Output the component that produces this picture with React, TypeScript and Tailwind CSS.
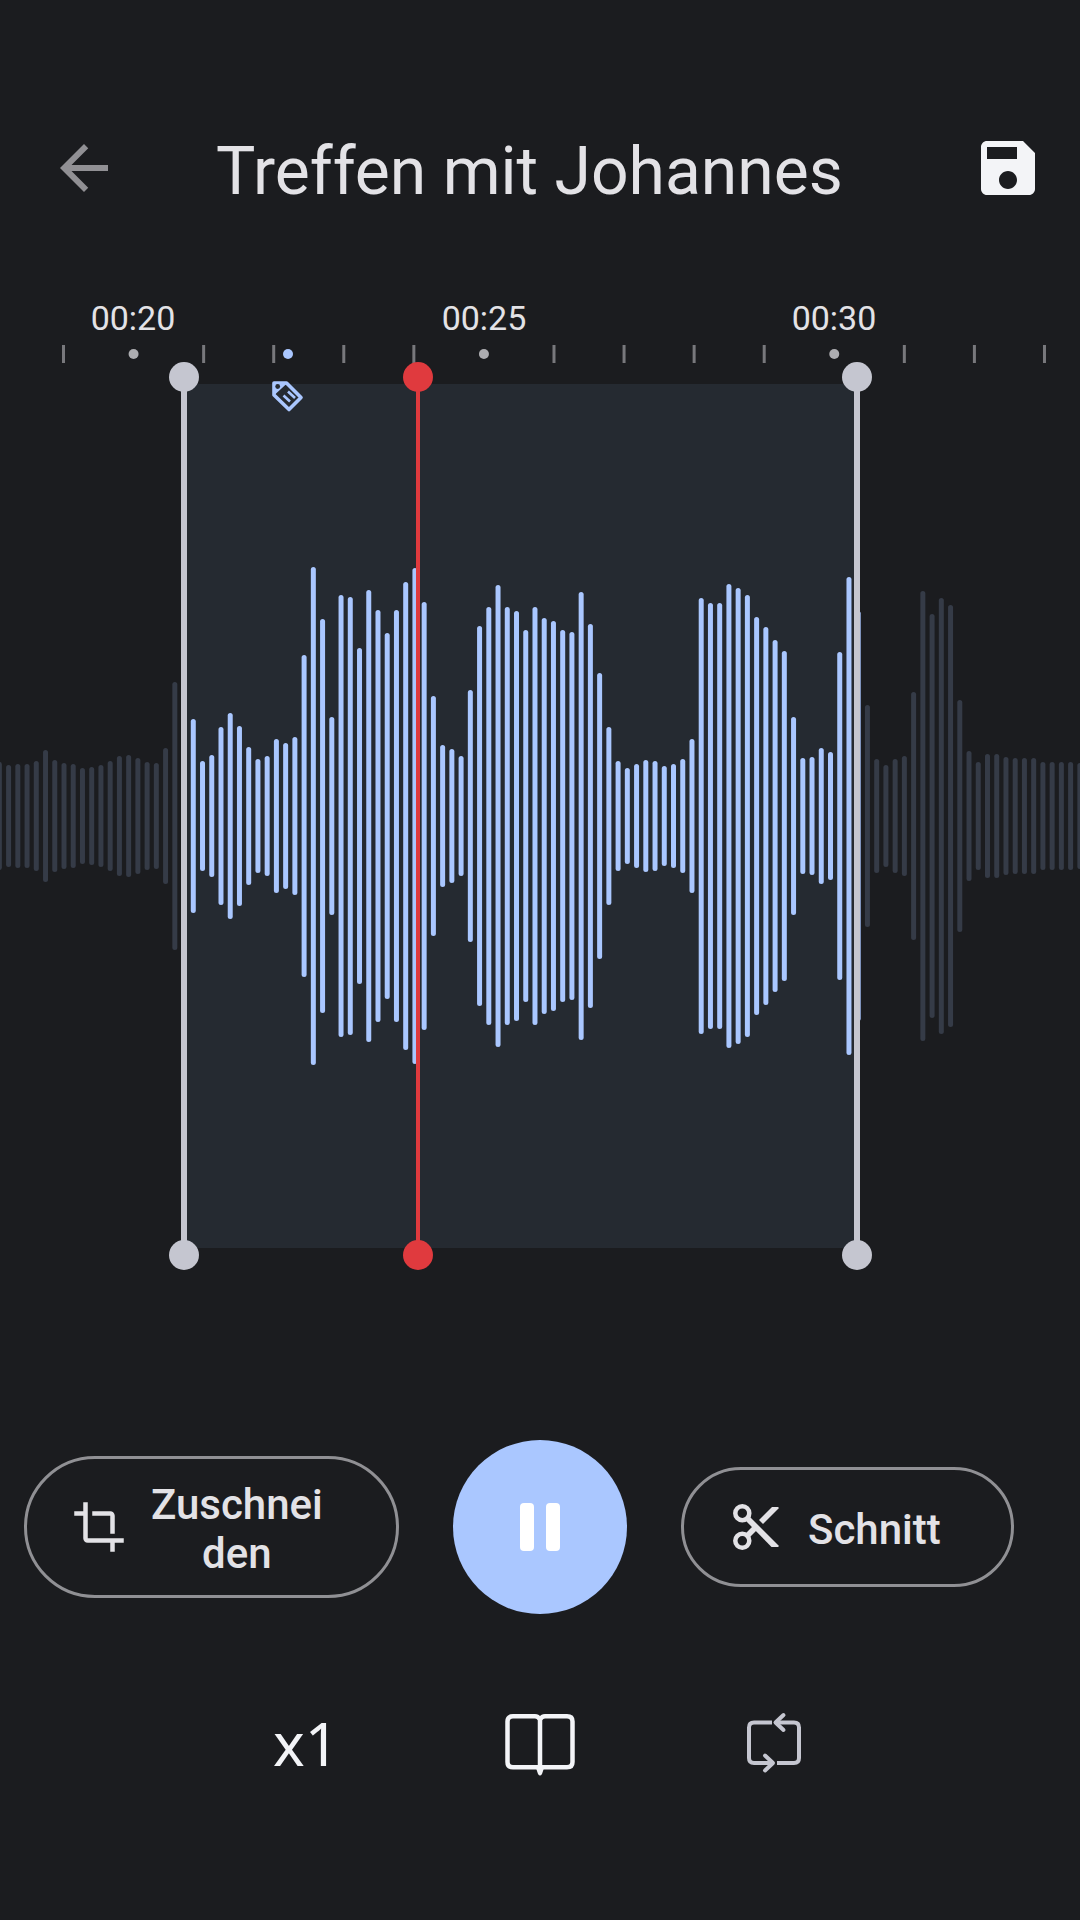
import { useState } from 'react';

// half height of every bar in the waveform, left to right
const peaks = [
  54, 51, 52, 52, 55, 66, 56, 53, 52, 48, 49, 51, 55, 60, 61, 58, 54, 53, 68, 134,
  60, 97, 55, 61, 89, 103, 90, 69, 57, 60, 77, 73, 79, 161, 249, 197, 99, 221, 219, 168,
  226, 206, 183, 206, 234, 248, 214, 120, 71, 67, 60, 126, 190, 209, 231, 209, 205, 186, 209, 198,
  195, 186, 184, 224, 192, 143, 89, 55, 48, 52, 56, 55, 50, 52, 57, 77, 218, 213, 213, 232,
  228, 221, 199, 189, 176, 165, 99, 58, 59, 68, 64, 164, 239, 205, 111, 57, 51, 57, 60, 124,
  225, 202, 218, 211, 116, 65, 54, 62, 62, 59, 58, 58, 58, 54, 54, 54, 54, 53,
];

const labels = [
  { x: 133, text: '00:20' },
  { x: 484, text: '00:25' },
  { x: 834, text: '00:30' },
];

const selection = { start: 184, end: 857 };
const playhead = 418;

const barX = (i: number) => i * 9.235 - 0.65;

function Marker({ x, width, color }: { x: number; width: number; color: string }) {
  return (
    <g fill={color}>
      <rect x={x - width / 2} y={87} width={width} height={878} />
      <circle cx={x} cy={87} r={15} />
      <circle cx={x} cy={965} r={15} />
    </g>
  );
}

function Timeline() {
  return (
    <svg viewBox="0 0 1080 990" className="block w-full" role="img" aria-label="Wellenform">
      {labels.map((l) => (
        <text
          key={l.text}
          x={l.x}
          y={40}
          textAnchor="middle"
          className="fill-[#e3e2e6] text-[34px]"
        >
          {l.text}
        </text>
      ))}

      {Array.from({ length: 15 }, (_, i) => {
        const x = 63.5 + i * 70.07;
        return i % 5 === 1 ? (
          <circle key={i} cx={x} cy={64} r={5} fill="#adadb1" />
        ) : (
          <rect key={i} x={x - 1.5} y={55} width={3} height={18} fill="#78787c" />
        );
      })}

      <rect x={selection.start} y={94} width={selection.end - selection.start} height={864} fill="#252a31" />

      {peaks.map((h, i) => {
        const x = barX(i);
        const selected = x >= selection.start && x <= selection.end + 2;
        return (
          <rect
            key={i}
            x={x - 2.5}
            y={526 - h}
            width={5}
            height={h * 2}
            rx={2.5}
            fill={selected ? '#aac7ff' : '#353b47'}
          />
        );
      })}

      {/* bookmark */}
      <circle cx={288} cy={64} r={5} fill="#aac7ff" />
      <g fill="none" stroke="#aac7ff" strokeLinejoin="round">
        <path d="M274 93H286.5L301 107.5 289 119.5 274 105z" strokeWidth={3.6} />
        <path d="M274 93H286L274 104z" fill="#aac7ff" strokeWidth={2} />
        <path d="M283.5 105.5 290 111.5M288 101.5 295 108" strokeWidth={2.6} />
      </g>
      <circle cx={277.7} cy={96.5} r={2.4} fill="#252a31" />

      <Marker x={selection.start} width={6} color="#c5c6d0" />
      <Marker x={selection.end} width={6} color="#c5c6d0" />
      <Marker x={playhead} width={4} color="#e03a3e" />
    </svg>
  );
}

function BackIcon() {
  return (
    <svg viewBox="0 0 24 24" className="size-18 fill-[#919094]">
      <path d="M20 11H7.83l5.59-5.59L12 4l-8 8 8 8 1.41-1.41L7.83 13H20v-2z" />
    </svg>
  );
}

function SaveIcon() {
  return (
    <svg viewBox="0 0 24 24" className="size-18 fill-[#f3f4f7]">
      <path d="M17 3H5c-1.11 0-2 .9-2 2v14c0 1.1.89 2 2 2h14c1.1 0 2-.9 2-2V7l-4-4zm-5 16c-1.66 0-3-1.34-3-3s1.34-3 3-3 3 1.34 3 3-1.34 3-3 3zm3-10H5V5h10v4z" />
    </svg>
  );
}

function CropIcon() {
  return (
    <svg viewBox="0 0 24 24" className="size-[54px] shrink-0 fill-[#e3e2e6]">
      <path d="M17 15h2V7c0-1.1-.9-2-2-2H9v2h8v8zM7 17V1H5v4H1v2h4v10c0 1.1.9 2 2 2h10v4h2v-4h4v-2H7z" />
    </svg>
  );
}

function CutIcon() {
  return (
    <svg viewBox="0 0 54 54" className="size-[54px] shrink-0">
      <g fill="none" stroke="#e3e2e6" strokeWidth={4.5}>
        <circle cx={13.3} cy={13.2} r={7} />
        <circle cx={13.3} cy={40.8} r={7} />
        <path d="M18.3 35.8 26 28" strokeWidth={5.6} />
      </g>
      <g fill="#e3e2e6">
        <path d="M20.5 16.5 49.5 45.5V47H42.5L16.5 20.5z" />
        <path d="M49.5 7V8.5L34 24 30 20 43 7z" />
      </g>
    </svg>
  );
}

function BookIcon() {
  return (
    <svg viewBox="0 0 72 72" className="size-18" fill="none" stroke="#f3f4f7" strokeWidth={4.5}>
      <path d="M36 12.5Q34 9.3 31 9.3H9Q3.500 9.3 3.500 14.500V55Q3.500 60.300 9 60.300H63Q68.500 60.300 68.500 55V14.500Q68.500 9.3 63 9.3H41Q38 9.3 36 12.500V64" />
      <path d="M32 61H40L38 67Q36 70 34 67z" fill="#f3f4f7" stroke="none" />
    </svg>
  );
}

function RepeatIcon() {
  return (
    <svg viewBox="0 0 72 72" className="size-18" fill="none" stroke="#c5c6d0" strokeWidth={4}>
      <path d="M34 15.5H16Q11 15.5 11 20.5V51Q11 56 16 56H34" />
      <path d="M39 56H56Q61 56 61 51V20.5Q61 15.5 56 15.5H39" />
      <path
        d="M45.5 8 37.5 15.5 45.5 23M27 48.5 35 56 27 63.5"
        strokeLinecap="round"
        strokeLinejoin="round"
      />
    </svg>
  );
}

function PauseIcon() {
  return (
    <svg viewBox="0 0 40 48" className="h-12 w-10 fill-white">
      <rect width={14} height={48} rx={4} />
      <rect x={26} width={14} height={48} rx={4} />
    </svg>
  );
}

function PlayIcon() {
  return (
    <svg viewBox="0 0 40 48" className="h-12 w-10 fill-white">
      <path d="M4 0 40 24 4 48z" />
    </svg>
  );
}

export default function App() {
  const [playing, setPlaying] = useState(true);

  return (
    <div className="flex min-h-screen flex-col bg-[#1b1c1f] pt-32 font-['Roboto',sans-serif] text-[#e3e2e6]">
      <header className="flex items-start pr-9 pl-12">
        <button type="button" aria-label="Zurück" className="py-1">
          <BackIcon />
        </button>
        <h1 className="flex-1 pt-1 pl-24 text-[66px] leading-20 whitespace-nowrap">Treffen mit Johannes</h1>
        <button type="button" aria-label="Speichern" className="py-1">
          <SaveIcon />
        </button>
      </header>

      <main className="pt-[78px]">
        <Timeline />
      </main>

      <div className="grid grid-cols-[1fr_174px_1fr] items-center pt-40">
        <button
          type="button"
          className="ml-6 mr-[54px] flex h-[142px] items-center gap-[25px] rounded-full border-3 border-[#909094] pl-[45px]"
        >
          <CropIcon />
          <span className="pt-1 text-center text-[42px] leading-[49px] font-medium">
            Zuschnei
            <br />
            den
          </span>
        </button>
        <button
          type="button"
          aria-label={playing ? 'Pause' : 'Wiedergabe'}
          onClick={() => setPlaying(!playing)}
          className="flex size-[174px] items-center justify-center rounded-full bg-[#aac7ff]"
        >
          {playing ? <PauseIcon /> : <PlayIcon />}
        </button>
        <button
          type="button"
          className="ml-[54px] mr-[66px] flex h-30 items-center gap-[25px] rounded-full border-3 border-[#909094] pl-[45px]"
        >
          <CutIcon />
          <span className="pt-1 text-[42px] leading-[49px] font-medium">Schnitt</span>
        </button>
      </div>

      <div className="flex justify-center pt-[93px] pb-28">
        <div className="grid grid-cols-3">
          <button
            type="button"
            aria-label="Geschwindigkeit x1"
            className="w-[234px] font-['Noto_Sans',sans-serif] text-[60px] leading-18 text-[#f3f4f7]"
          >
            x1
          </button>
          <button type="button" aria-label="Lesezeichen" className="flex w-[234px] justify-center">
            <BookIcon />
          </button>
          <button type="button" aria-label="Wiederholen" className="flex w-[234px] justify-center">
            <RepeatIcon />
          </button>
        </div>
      </div>
    </div>
  );
}
